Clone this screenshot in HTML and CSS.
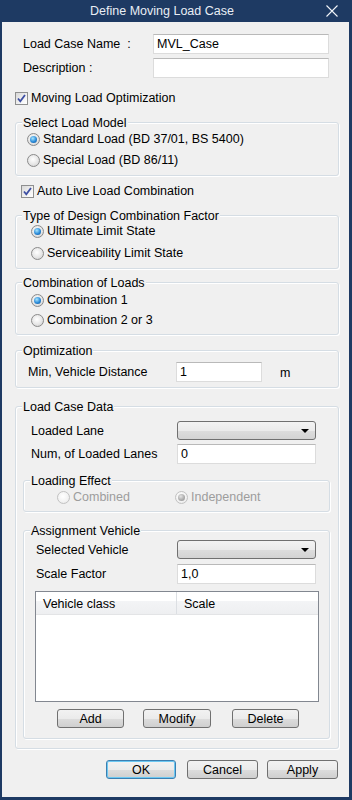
FILE: index.html
```html
<!DOCTYPE html>
<html lang="en">
<head>
    <meta charset="UTF-8">
    <title>Define Moving Load Case</title>
    <link rel="stylesheet" href="styles.css">
</head>
<body>
<div class="window">
    <div class="titlebar">
        <div class="title">Define Moving Load Case</div>
        <div class="close">
            <svg width="12" height="12" viewBox="0 0 12 12"><path d="M0.5 0.5 L11.5 11.5 M11.5 0.5 L0.5 11.5" stroke="#f2f5f9" stroke-width="1.1" fill="none"/></svg>
        </div>
    </div>

    <div class="content">
        <div class="field-row top-row">
            <span class="label name-label">Load Case Name&nbsp; :</span>
            <input class="textbox name-box" type="text" value="MVL_Case">
        </div>
        <div class="field-row top-row second">
            <span class="label name-label">Description :</span>
            <input class="textbox name-box" type="text" value="">
        </div>

        <div class="check-row opt-check">
            <span class="checkbox"><svg width="11" height="11" viewBox="0 0 11 11"><path d="M2 5.5 L4.3 8.3 L9 2" stroke="#3d4fa3" stroke-width="1.8" fill="none"/></svg></span>
            <span>Moving Load Optimization</span>
        </div>

        <div class="group g-model">
            <span class="caption">Select Load Model</span>
            <div class="option"><span class="radio on"></span>Standard Load (BD 37/01, BS 5400)</div>
            <div class="option"><span class="radio"></span>Special Load (BD 86/11)</div>
        </div>

        <div class="check-row live-check">
            <span class="checkbox"><svg width="11" height="11" viewBox="0 0 11 11"><path d="M2 5.5 L4.3 8.3 L9 2" stroke="#3d4fa3" stroke-width="1.8" fill="none"/></svg></span>
            <span>Auto Live Load Combination</span>
        </div>

        <div class="group g-factor">
            <span class="caption">Type of Design Combination Factor</span>
            <div class="option"><span class="radio on"></span>Ultimate Limit State</div>
            <div class="option"><span class="radio"></span>Serviceability Limit State</div>
        </div>

        <div class="group g-combo">
            <span class="caption">Combination of Loads</span>
            <div class="option"><span class="radio on"></span>Combination 1</div>
            <div class="option"><span class="radio"></span>Combination 2 or 3</div>
        </div>

        <div class="group g-opt">
            <span class="caption">Optimization</span>
            <div class="field-row">
                <span class="label opt-label">Min, Vehicle Distance</span>
                <input class="textbox dist-box" type="text" value="1">
                <span class="unit">m</span>
            </div>
        </div>

        <div class="group g-data">
            <span class="caption">Load Case Data</span>
            <div class="field-row data-row">
                <span class="label data-label">Loaded Lane</span>
                <div class="combo"><span class="arrow"></span></div>
            </div>
            <div class="field-row data-row spaced">
                <span class="label data-label">Num, of Loaded Lanes</span>
                <input class="textbox combo-box" type="text" value="0">
            </div>

            <div class="group g-effect">
                <span class="caption">Loading Effect</span>
                <div class="effect-row">
                    <div class="option disabled combined"><span class="radio"></span>Combined</div>
                    <div class="option disabled"><span class="radio on"></span>Independent</div>
                </div>
            </div>

            <div class="group g-vehicle">
                <span class="caption">Assignment Vehicle</span>
                <div class="field-row veh-row">
                    <span class="label veh-label">Selected Vehicle</span>
                    <div class="combo"><span class="arrow"></span></div>
                </div>
                <div class="field-row veh-row spaced-5">
                    <span class="label veh-label">Scale Factor</span>
                    <input class="textbox combo-box" type="text" value="1,0">
                </div>

                <div class="list">
                    <div class="list-head">
                        <div class="col col-class">Vehicle class</div>
                        <div class="col col-scale">Scale</div>
                    </div>
                </div>

                <div class="list-buttons">
                    <button class="btn btn-add">Add</button>
                    <button class="btn btn-modify">Modify</button>
                    <button class="btn btn-delete">Delete</button>
                </div>
            </div>
        </div>

        <div class="dialog-buttons">
            <button class="btn btn-ok">OK</button>
            <button class="btn btn-cancel">Cancel</button>
            <button class="btn btn-apply">Apply</button>
        </div>
    </div>
</div>
</body>
</html>
```

FILE: styles.css
```css
body {
    margin: 0;
    font-family: 'Liberation Sans', Arial, sans-serif;
    font-size: 12.5px;
    color: #000;
}
.window {
    width: 352px;
    height: 800px;
    box-sizing: border-box;
    background: #1e3a63;
    border-left: 2px solid #1e3a63;
    border-right: 3px solid #1e3a63;
    border-bottom: 3px solid #1e3a63;
    display: flex;
    flex-direction: column;
}
.titlebar {
    height: 22px;
    display: flex;
    align-items: center;
    flex-shrink: 0;
}
.title {
    flex: 1;
    text-align: center;
    color: #e9eef5;
    font-size: 12.5px;
    margin-left: -2px;
}
.close {
    width: 25px;
    height: 22px;
    display: flex;
    align-items: center;
    padding-left: 2px;
    box-sizing: border-box;
}
.content {
    flex: 1;
    background: #f0f0f0;
    padding: 12px 10px 0 13px;
    display: flex;
    flex-direction: column;
}

/* rows and labels */
.field-row {
    display: flex;
    align-items: center;
}
.top-row {
    padding-left: 8px;
    height: 20px;
}
.top-row.second {
    margin-top: 4px;
}
.name-label {
    width: 130px;
}
.label {
    flex-shrink: 0;
    white-space: nowrap;
}
.textbox {
    box-sizing: border-box;
    height: 20px;
    margin: 0;
    padding: 0 3px;
    border: 1px solid #dcdcdc;
    border-top-color: #b9b9b9;
    background: #fff;
    font-family: 'Liberation Sans', Arial, sans-serif;
    font-size: 12.5px;
    color: #000;
    outline: none;
}
.name-box {
    width: 176px;
}

/* check boxes */
.check-row {
    display: flex;
    align-items: center;
    height: 14px;
    gap: 3px;
}
.opt-check {
    margin-top: 13px;
}
.live-check {
    margin-top: 8px;
    padding-left: 6px;
}
.checkbox {
    width: 13px;
    height: 13px;
    box-sizing: border-box;
    border: 1px solid #8e8f8f;
    background: linear-gradient(135deg, #d8d8d8, #f6f6f6 70%, #fff);
    display: flex;
    align-items: center;
    justify-content: center;
}

/* group boxes */
.group {
    position: relative;
    border: 1px solid #d5dde4;
    border-radius: 3px;
    box-shadow: inset 1px 1px 0 #fff, 1px 1px 0 #fff;
    display: flex;
    flex-direction: column;
}
.caption {
    position: absolute;
    top: -8px;
    left: 6px;
    padding: 0 1px;
    line-height: 16px;
    background: #f0f0f0;
    white-space: nowrap;
}
.option {
    display: flex;
    align-items: center;
    height: 16px;
    gap: 3px;
    white-space: nowrap;
}
.g-model {
    margin-top: 17px;
    padding: 8px 0 7px 11px;
    gap: 5px;
}
.g-factor {
    margin-top: 17px;
    padding: 7px 0 7px 15px;
    gap: 6px;
}
.g-combo {
    margin-top: 13px;
    padding: 9px 0 6px 15px;
    gap: 4px;
}
.g-opt {
    margin-top: 15px;
    padding: 11px 0 5px 12px;
}
.opt-label {
    width: 148px;
}
.dist-box {
    width: 86px;
}
.unit {
    margin-left: 18px;
    margin-top: 2px;
}
.g-data {
    margin-top: 18px;
    padding: 14px 8px 9px 7px;
}
.data-row {
    padding-left: 8px;
}
.data-row.spaced {
    margin-top: 4px;
}
.data-label {
    width: 146px;
}
.combo {
    width: 139px;
    height: 19px;
    box-sizing: border-box;
    border: 1px solid #707070;
    border-radius: 3px;
    background: linear-gradient(#f3f3f3, #ebebeb 50%, #dddddd 51%, #d3d3d3);
    position: relative;
}
.arrow {
    position: absolute;
    right: 6px;
    top: 7px;
    border-left: 4px solid transparent;
    border-right: 4px solid transparent;
    border-top: 4px solid #000;
}
.combo-box {
    width: 139px;
}

/* radios */
.radio {
    width: 13px;
    height: 13px;
    box-sizing: border-box;
    border-radius: 50%;
    border: 1px solid #8a8a8a;
    background: radial-gradient(circle at 45% 40%, #ffffff, #e6e6e6 55%, #c9c9c9);
    position: relative;
    flex-shrink: 0;
}
.radio.on::after {
    content: '';
    position: absolute;
    left: 2px;
    top: 2px;
    width: 7px;
    height: 7px;
    border-radius: 50%;
    background: radial-gradient(circle at 40% 35%, #a8e6ff, #2a8ad8 55%, #0d4c8c);
}
.option.disabled {
    color: #9d9d9d;
}
.option.disabled .radio {
    border-color: #c2c2c2;
    background: radial-gradient(circle at 45% 40%, #ffffff, #f2f2f2 60%, #e2e2e2);
}
.option.disabled .radio.on::after {
    background: radial-gradient(circle at 40% 35%, #e4e4e4, #a9a9a9 60%, #8f8f8f);
}

/* sub groups */
.g-effect {
    margin-top: 16px;
    padding: 8px 0 6px 33px;
}
.effect-row {
    display: flex;
}
.combined {
    width: 118px;
}
.g-vehicle {
    margin-top: 18px;
    padding: 9px 0 10px 12px;
}
.veh-label {
    width: 141px;
}
.spaced-5 {
    margin-top: 5px;
}
.list {
    margin-top: 7px;
    margin-left: -1px;
    width: 284px;
    height: 111px;
    box-sizing: border-box;
    border: 1px solid #828790;
    background: #fff;
}
.list-head {
    display: flex;
    height: 23px;
    box-sizing: border-box;
    background: linear-gradient(#ffffff 40%, #f3f4f6 41%, #eeeff1);
    border-bottom: 1px solid #e3e4e6;
}
.col {
    display: flex;
    align-items: center;
    box-sizing: border-box;
    padding-left: 7px;
    padding-top: 1px;
}
.col-class {
    width: 141px;
    border-right: 1px solid #dcdfe3;
}
.list-buttons {
    display: flex;
    margin-top: 7px;
    padding-left: 21px;
    gap: 19px;
}
.btn {
    height: 19px;
    box-sizing: border-box;
    padding: 0;
    border: 1px solid #707070;
    border-radius: 3px;
    background: linear-gradient(#f2f2f2, #ebebeb 50%, #dddddd 51%, #cfcfcf);
    font-family: 'Liberation Sans', Arial, sans-serif;
    font-size: 12.5px;
    color: #000;
}
.btn-add {
    width: 67px;
}
.btn-modify {
    width: 68px;
    margin-right: 2px;
}
.btn-delete {
    width: 67px;
}
.dialog-buttons {
    display: flex;
    justify-content: flex-end;
    margin-top: 11px;
    margin-right: 1px;
}
.btn-ok {
    width: 70px;
    border-color: #3c7fb1;
    box-shadow: inset 0 0 0 1px #6cc8f2;
    margin-right: 11px;
}
.btn-cancel {
    width: 71px;
    margin-right: 9px;
}
.btn-apply {
    width: 71px;
}
```
